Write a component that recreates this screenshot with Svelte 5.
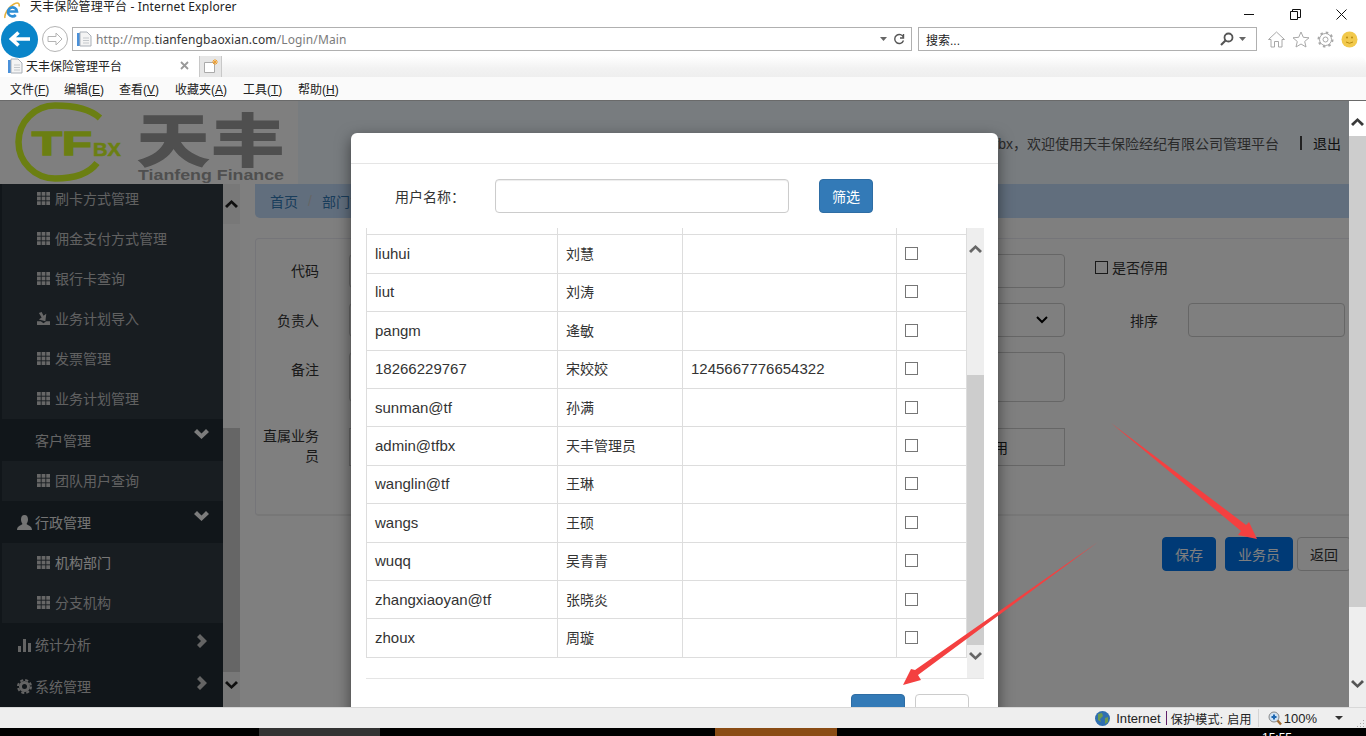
<script>
  const menus = [['文件','F'],['编辑','E'],['查看','V'],['收藏夹','A'],['工具','T'],['帮助','H']];
  const users = [
    ['liuhui','刘慧',''],['liut','刘涛',''],['pangm','逄敏',''],['18266229767','宋姣姣','1245667776654322'],
    ['sunman@tf','孙满',''],['admin@tfbx','天丰管理员',''],['wanglin@tf','王琳',''],['wangs','王硕',''],
    ['wuqq','吴青青',''],['zhangxiaoyan@tf','张晓炎',''],['zhoux','周璇','']
  ];
  const firstSubs = [['刷卡方式管理','th'],['佣金支付方式管理','th'],['银行卡查询','th'],['业务计划导入','imp'],['发票管理','th'],['业务计划管理','th']];
  const squares = [0,5,10].flatMap(y => [0,5,10].map(x => [x,y]));
</script>

{#snippet th()}
  <svg class="ico" width="13" height="13" viewBox="0 0 14 14">
    {#each squares as s}<rect x={s[0]} y={s[1]} width="4" height="4" fill="currentColor"/>{/each}
  </svg>
{/snippet}
{#snippet imp()}
  <svg class="ico" width="13" height="13" viewBox="0 0 14 14">
    <path d="M0 14V10H4L7 12 10 10H14V14ZM2 1L5 0 7 4 10 2 9 10 2 8 5 6Z" fill="currentColor"/>
  </svg>
{/snippet}
{#snippet chevDown(cls)}
  <svg class={cls} width="15" height="10" viewBox="0 0 15 10"><path d="M0 3L3 0 7.500 4.500 12 0 15 3 7.500 10Z" fill="currentColor"/></svg>
{/snippet}
{#snippet chevRight()}
  <svg class="chev right" width="10" height="14" viewBox="0 0 10 14"><path d="M3 0L10 7 3 14 0 11 4 7 0 3Z" fill="currentColor"/></svg>
{/snippet}
{#snippet chevUp(color)}
  <svg width="13" height="8" viewBox="0 0 13 8"><path d="M0 6L6.500 0 13 6 11 8 6.500 3.500 2 8Z" fill={color}/></svg>
{/snippet}
{#snippet chevDn(color)}
  <svg width="13" height="8" viewBox="0 0 13 8"><path d="M0 2L6.500 8 13 2 11 0 6.500 4.500 2 0Z" fill={color}/></svg>
{/snippet}
{#snippet pageIcon()}
  <svg width="16" height="16" viewBox="0 0 16 16">
    <rect x="1" y="2" width="6" height="13" fill="#4a90d9"/>
    <path d="M4 1H11L15 5V15H4Z" fill="#f4f4f4" stroke="#aab0b8"/>
    <path d="M7 7H13M7 9.500H13M7 12H13" stroke="#c4c8cc"/>
  </svg>
{/snippet}

<div class="window">
  <div class="titlebar">
    <svg class="ie" width="16" height="17" viewBox="0 0 16 17">
      <path d="M1 16C0 13 4 5 10 2 13.500 0.300 16 1 15 4.500" fill="none" stroke="#e8b23c" stroke-width="1.500"/>
      <path d="M4.500 9.500H13A4.500 4.500 0 1 0 11.800 13" fill="none" stroke="#2e8ed6" stroke-width="2.600"/>
    </svg>
    <span class="title">天丰保险管理平台 - Internet Explorer</span>
    <div class="winctl">
      <svg width="11" height="11" viewBox="0 0 11 11"><path d="M0 5.500H10" stroke="#111"/></svg>
      <svg width="11" height="11" viewBox="0 0 11 11"><path d="M0.500 2.500H7.500V10.500H0.500ZM2.500 2.500V0.500H10.500V8.500H7.500" fill="none" stroke="#111"/></svg>
      <svg width="11" height="11" viewBox="0 0 11 11"><path d="M0.500 0.500L10.500 10.500M10.500 0.500L0.500 10.500" stroke="#111"/></svg>
    </div>
  </div>

  <div class="navbar">
    <div class="back">
      <svg width="22" height="16" viewBox="0 0 22 16"><path d="M9.500 1.500L2.500 8 9.500 14.500M3.500 8H21" fill="none" stroke="#fff" stroke-width="3.600"/></svg>
    </div>
    <div class="forward">
      <svg width="18" height="14" viewBox="0 0 18 14"><path d="M10 1L16 7 10 13V9.500H2V4.500H10Z" fill="none" stroke="#b4b4b4"/></svg>
    </div>
    <div class="addr">
      {@render pageIcon()}
      <span class="url">http://mp.<b>tianfengbaoxian.com</b>/Login/Main</span>
      <svg class="drop" width="7" height="4" viewBox="0 0 7 4"><path d="M0 0H7L3.500 4Z" fill="#666"/></svg>
      <svg width="12" height="12" viewBox="0 0 12 12"><path d="M10.500 4.500A4.500 4.500 0 1 0 10.500 7.500M10.500 1V5H7" fill="none" stroke="#555" stroke-width="1.400"/></svg>
    </div>
    <div class="search">
      <span class="stext">搜索...</span>
      <svg width="14" height="14" viewBox="0 0 14 14"><circle cx="8.500" cy="5.500" r="4" fill="none" stroke="#555" stroke-width="1.800"/><path d="M5.500 8.500L1 13" stroke="#555" stroke-width="2.200"/></svg>
      <svg class="drop2" width="7" height="4" viewBox="0 0 7 4"><path d="M0 0H7L3.500 4Z" fill="#666"/></svg>
    </div>
    <div class="tools">
      <svg width="17" height="17" viewBox="0 0 17 17"><path d="M0.500 8.500L8.500 1 16.500 8.500H14V16H10.500V10.500H6.500V16H3V8.500Z" fill="none" stroke="#a8a8a8"/></svg>
      <svg width="18" height="17" viewBox="0 0 18 17"><path d="M9 1L11.300 6.300 17 6.800 12.700 10.500 14 16 9 13 4 16 5.300 10.500 1 6.800 6.700 6.300Z" fill="none" stroke="#a8a8a8"/></svg>
      <svg width="17" height="17" viewBox="0 0 17 17"><circle cx="8.500" cy="8.500" r="2.500" fill="none" stroke="#a8a8a8"/><circle cx="8.500" cy="8.500" r="6" fill="none" stroke="#a8a8a8" stroke-width="1"/><circle cx="8.500" cy="8.500" r="7" fill="none" stroke="#a8a8a8" stroke-width="2" stroke-dasharray="2.500 3"/></svg>
      <svg width="17" height="17" viewBox="0 0 17 17"><circle cx="8.500" cy="8.500" r="8" fill="#f2c94c"/><circle cx="6" cy="6.500" r="1" fill="#b88a10"/><circle cx="11" cy="6.500" r="1" fill="#b88a10"/><path d="M5 11Q8.500 13.500 12 11" fill="none" stroke="#b88a10"/></svg>
    </div>
  </div>

  <div class="tabbar">
    <div class="tab">
      {@render pageIcon()}
      <span class="tabtitle">天丰保险管理平台</span>
      <svg width="9" height="9" viewBox="0 0 9 9"><path d="M1 1L8 8M8 1L1 8" stroke="#999" stroke-width="1.800"/></svg>
    </div>
    <div class="newtab">
      <svg width="16" height="16" viewBox="0 0 16 16"><path d="M1.500 4.500H11.500V14.500H1.500Z" fill="#fff" stroke="#aaa"/><path d="M12 1V7M9 4H15M10 2L14 6M14 2L10 6" stroke="#f0a030"/></svg>
    </div>
    <div class="tabfade"></div>
  </div>

  <div class="menubar">
    {#each menus as m}
      <span class="menu">{m[0]}(<u>{m[1]}</u>)</span>
    {/each}
  </div>

  <div class="page">
    <div class="main">
      <header class="head">
        <svg class="logo" width="298" height="83" viewBox="0 0 298 83">
          <rect width="298" height="83" fill="#fff"/>
          <path d="M100 17C90 8 72 4.500 55 4.500A36.500 36.500 0 0 0 55 77.500C72 77.500 88 74 97 62" fill="none" stroke="#d6ff24" stroke-width="6.500"/>
          <text x="32" y="54" class="lg-tf" textLength="60" lengthAdjust="spacingAndGlyphs">TF</text>
          <text x="93" y="55" class="lg-bx" textLength="28" lengthAdjust="spacingAndGlyphs">BX</text>
          <text x="136" y="61" class="lg-cn" textLength="149" lengthAdjust="spacingAndGlyphs">天丰</text>
          <text x="138" y="79" class="lg-en" textLength="146" lengthAdjust="spacingAndGlyphs">Tianfeng Finance</text>
        </svg>
        <div class="welcome">
          <span class="wtext">admin@tfbx，欢迎使用天丰保险经纪有限公司管理平台</span>
          <span class="bar"></span>
          <span class="logout">退出</span>
        </div>
      </header>

      <div class="body">
        <aside class="side">
          <div class="sidelist">
            <div class="subs">
              {#each firstSubs as s}
                <div class="sub">{#if s[1]==='th'}{@render th()}{:else}{@render imp()}{/if}<span>{s[0]}</span></div>
              {/each}
            </div>
            <div class="parent plain"><span>客户管理</span>{@render chevDown('chev')}</div>
            <div class="subs">
              <div class="sub">{@render th()}<span>团队用户查询</span></div>
            </div>
            <div class="parent active">
              <svg class="pico" width="15" height="15" viewBox="0 0 15 15"><path d="M7.500 0C10 0 11 2 11 4.500 11 6.500 10 8 9.500 9 11 10.500 15 11 15 15H0C0 11 4 10.500 5.500 9 5 8 4 6.500 4 4.500 4 2 5 0 7.500 0Z" fill="currentColor"/></svg>
              <span>行政管理</span>{@render chevDown('chev')}
            </div>
            <div class="subs">
              <div class="sub current">{@render th()}<span>机构部门</span></div>
              <div class="sub">{@render th()}<span>分支机构</span></div>
            </div>
            <div class="parent">
              <svg class="pico" width="15" height="15" viewBox="0 0 15 15"><path d="M1 9H4V15H1ZM6 2H9V15H6ZM11 6H14V15H11Z" fill="currentColor"/></svg>
              <span>统计分析</span>{@render chevRight()}
            </div>
            <div class="parent">
              <svg class="pico" width="15" height="15" viewBox="0 0 15 15"><circle cx="7.500" cy="7.500" r="4" fill="none" stroke="currentColor" stroke-width="3"/><circle cx="7.500" cy="7.500" r="6.500" fill="none" stroke="currentColor" stroke-width="2" stroke-dasharray="3 2.100"/></svg>
              <span>系统管理</span>{@render chevRight()}
            </div>
          </div>
        </aside>
        <div class="sidescroll">
          <div class="sarrow">{@render chevUp('#1c1c1c')}</div>
          <div class="sgap"></div>
          <div class="sthumb"></div>
          <div class="sarrow low">{@render chevDn('#1c1c1c')}</div>
        </div>

        <section class="content">
          <nav class="crumb"><a href="#a">首页</a><i>/</i><a href="#b">部门管理</a></nav>
          <div class="panel">
            <div class="form">
              <label class="lab first" for="a1">代码</label>
              <input id="a1" class="inp" />
              <div class="stop"><input type="checkbox" class="check big" /><span>是否停用</span></div>

              <label class="lab" for="a2">负责人</label>
              <div class="inp sel" id="a2">
                <svg width="12" height="8" viewBox="0 0 12 8"><path d="M1 1L6 6 11 1" fill="none" stroke="#000" stroke-width="2"/></svg>
              </div>
              <label class="lab" for="a3">排序</label>
              <input id="a3" class="inp" />

              <label class="lab" for="a4">备注</label>
              <textarea id="a4" class="inp area"></textarea>
              <div class="empty"></div>

              <label class="lab lab4" for="a5">直属业务员</label>
              <div class="inp btnish" id="a5">启用</div>
              <div class="empty"></div>
            </div>
          </div>
          <div class="actions">
            <button class="pb">保存</button>
            <button class="pb">业务员</button>
            <button class="pd">返回</button>
          </div>
        </section>
      </div>
    </div>

    <div class="pagescroll">
      <div class="parrow">{@render chevUp('#3a3a3a')}</div>
      <div class="pthumb"></div>
      <div class="parrow2">{@render chevDn('#555')}</div>
    </div>

    <div class="overlay"></div>

    <div class="modal">
      <div class="mhead"></div>
      <div class="filter">
        <span class="flabel">用户名称：</span>
        <input class="finput" />
        <button class="fbtn">筛选</button>
      </div>
      <div class="tablewrap">
        <div class="table">
          <div class="row partial"><div></div><div></div><div></div><div></div></div>
          {#each users as u}
            <div class="row">
              <div class="lat">{u[0]}</div>
              <div class="cjk">{u[1]}</div>
              <div class="lat">{u[2]}</div>
              <div class="chk"><input type="checkbox" class="check" /></div>
            </div>
          {/each}
        </div>
        <div class="mscroll">
          <div class="marrow">{@render chevUp('#666')}</div>
          <div class="mthumb"></div>
          <div class="marrow">{@render chevDn('#666')}</div>
        </div>
      </div>
      <div class="mfoot">
        <button class="okb"></button>
        <button class="cab"></button>
      </div>
    </div>

    <svg class="arrows" width="1366" height="606" viewBox="0 101 1366 606">
      <polygon points="1111,423 1246,525 1249,522 1257,539 1238,535 1241,531" fill="#f44040"/>
      <polygon points="1098,542 918,675 921,680 903,685 911,669 915,670" fill="#f44040"/>
    </svg>
  </div>

  <footer class="status">
    <svg width="15" height="15" viewBox="0 0 15 15"><circle cx="7.500" cy="7.500" r="7.500" fill="#2f6fb0"/><path d="M3 3L7 2 8 5 5 8 6 11 3 9ZM10 7L13 6 13 11 10 13Z" fill="#6b9a50"/></svg>
    <span class="st1">Internet</span><span class="pipe"></span><span class="st2">保护模式: 启用</span>
    <span class="sep"></span>
    <svg width="14" height="15" viewBox="0 0 14 15"><circle cx="6" cy="6" r="5" fill="#cfe2f4" stroke="#888"/><path d="M3.500 6H8.500M6 3.500V8.500" stroke="#1d66b0" stroke-width="2"/><path d="M9.500 9.500L13 13.500" stroke="#a06a30" stroke-width="2.400"/></svg>
    <span class="st3">100%</span>
    <svg class="st4" width="8" height="4" viewBox="0 0 8 4"><path d="M0 0H8L4 4Z" fill="#333"/></svg>
    <svg class="grip" width="9" height="9" viewBox="0 0 9 9"><path d="M7 1H8V2H7ZM4 4H5V5H4ZM7 4H8V5H7ZM1 7H2V8H1ZM4 7H5V8H4ZM7 7H8V8H7Z" fill="#aaa"/></svg>
  </footer>

  <div class="taskbar">
    <span class="t1"></span><span class="t2"></span><span class="clock">15:55</span>
  </div>
</div>

<style>
  :global(body) { margin: 0; background: #fff; }
  .window {
    width: 1366px; height: 736px; overflow: hidden; display: flex; flex-direction: column;
    font-family: "Liberation Sans", "Noto Sans CJK SC", sans-serif; font-size: 14px; color: #333;
  }
  button, input, textarea { font-family: inherit; margin: 0; box-sizing: border-box; }

  .titlebar { height: 22px; display: flex; align-items: center; background: #fff; flex: none; }
  .ie { margin: -2px 0 0 4px; }
  .title { margin-left: 10px; font-size: 12px; line-height: 12px; color: #222; letter-spacing: .15px; margin-top: -8px; font-family: "Noto Sans", "Noto Sans CJK SC", sans-serif; }
  .winctl { margin-left: auto; margin-right: 19px; display: flex; gap: 35px; margin-top: 6px; }

  .navbar { height: 34px; display: flex; align-items: center; flex: none; background: #fff; position: relative; }
  .back { width: 37px; height: 37px; border-radius: 50%; background: #0a85c9; margin-left: 1px; display: flex; align-items: center; justify-content: center; flex: none; z-index: 1; }
  .forward { width: 26px; height: 26px; border-radius: 50%; border: 1px solid #b4b4b4; box-sizing: border-box; margin-left: 4px; display: flex; align-items: center; justify-content: center; flex: none; }
  .addr, .search { height: 24px; border: 1px solid #b0b0b0; box-sizing: border-box; display: flex; align-items: center; background: #fff; }
  .addr { width: 840px; margin-left: 4px; padding: 0 6px 0 3px; }
  .url { margin-left: 4px; font-size: 12px; color: #7b7b7b; letter-spacing: .13px; flex: 1; font-family: "Noto Sans", sans-serif; }
  .url b { color: #333; font-weight: 400; }
  .drop { margin-right: 6px; }
  .search { width: 339px; margin-left: 6px; padding: 0 10px 0 7px; }
  .stext { flex: 1; font-size: 12px; color: #222; }
  .drop2 { margin-left: 5px; }
  .tools { margin-left: 11px; display: flex; gap: 7px; align-items: center; }

  .tabbar { height: 21px; display: flex; flex: none; background: #fff; }
  .tab { width: 197px; height: 21px; box-sizing: border-box; display: flex; align-items: center; padding: 0 8px 2px 7px; background: #fff; }
  .tabtitle { font-size: 12px; margin-left: 3px; flex: 1; color: #222; }
  .newtab { width: 23px; height: 23px; margin: -2px 0 0 2px; background: #e6e6e6; border: 1px solid #c8c8c8; border-bottom: 0; box-sizing: border-box; display: flex; align-items: center; justify-content: center; }
  .tabfade { flex: 1; background: linear-gradient(#fff, #f2f2f2 60%, #eee); border-radius: 0 8px 0 0; }

  .menubar { height: 24px; flex: none; display: flex; align-items: center; background: #fafafa; border-bottom: 1px solid #6a6a6a; box-sizing: border-box; padding-left: 10px; font-size: 12px; color: #222; }
  .menu { width: 55px; white-space: nowrap; }
  .menu:nth-child(1) { width: 54px; }
  .menu:nth-child(3) { width: 56px; }
  .menu:nth-child(4) { width: 68px; }

  .page { height: 606px; flex: none; display: flex; position: relative; overflow: hidden; background: #fff; }
  .main { width: 1349px; flex: none; display: flex; flex-direction: column; overflow: hidden; }

  .head { height: 83px; flex: none; background: #f0f8ff; display: flex; }
  .logo { flex: none; }
  .lg-tf { font: 700 33px "Liberation Sans", sans-serif; fill: #d6ff24; stroke: #d6ff24; stroke-width: 1.4px; }
  .lg-bx { font: 700 18px "Liberation Sans", sans-serif; fill: #d6ff24; stroke: #d6ff24; stroke-width: .5px; }
  .lg-cn { font: 900 58px "Noto Sans CJK SC", sans-serif; fill: #9e9e9e; }
  .lg-en { font: 700 15px "Liberation Sans", sans-serif; fill: #9e9e9e; }
  .welcome { margin-left: auto; display: flex; align-items: center; height: 20px; margin-top: 32px; padding-right: 8px; white-space: nowrap; }
  .wtext { color: #555; }
  .bar { width: 2px; height: 14px; background: #444; margin: 0 11px 0 21px; }
  .logout { color: #222; }

  .body { flex: 1; display: flex; min-height: 0; }
  .side { width: 223px; flex: none; background: #222c34; overflow: hidden; }
  .sidelist { margin-top: -5px; }
  .subs { margin-left: 2px; background: #303a42; }
  .sub { height: 40px; display: flex; align-items: center; padding: 0 0 2px 35px; color: #c2c2c2; font-size: 14px; gap: 5px; box-sizing: border-box; }
  .sub.current { color: #f0f0f0; }
  .ico { flex: none; }
  .sub .ico { color: #cfcfcf; }
  .parent { height: 42px; display: flex; align-items: center; padding-left: 17px; color: #c8c8c8; position: relative; gap: 3px; box-sizing: border-box; }
  .parent.plain { padding-left: 35px; }
  .parent.active { color: #e8e8e8; }
  .pico { flex: none; }
  .parent :global(.chev) { position: absolute; left: 194px; top: 10px; color: #f8f8f8; }
  .parent :global(.chev.right) { left: 197px; top: 11px; color: #c8c8c8; }

  .sidescroll { width: 17px; flex: none; display: flex; flex-direction: column; background: #f0f0f0; }
  .sarrow { height: 40px; display: flex; align-items: center; justify-content: center; flex: none; }
  .sgap { height: 204px; flex: none; background: #fafafa; }
  .sthumb { flex: 1; background: #cdcdcd; }
  .sarrow.low { height: 35px; padding-bottom: 9px; box-sizing: border-box; background: #f0f0f0; }

  .content { flex: 1; min-width: 0; padding-left: 15px; background: #fff; overflow: hidden; }
  .crumb { height: 34px; background: #c2dcfb; border-bottom-left-radius: 5px; display: flex; align-items: center; padding-left: 15px; }
  .crumb a { color: #337ab7; text-decoration: none; }
  .crumb i { color: #ccc; font-style: normal; margin: 0 10px; }
  .panel { margin-top: 20px; height: 278px; width: 1120px; box-sizing: border-box; background: #fff; border: 1px solid #eaeaf2; border-bottom: 2px solid #eee; border-radius: 4px; padding-top: 15px; }
  .form { display: grid; grid-template-columns: 63px 716px 63px 157px; column-gap: 30px; row-gap: 15px; grid-template-rows: 34px 34px 50px 38px; }
  .lab { text-align: right; padding-top: 8px; color: #333; font-weight: 400; line-height: 20px; }
  .lab.first { padding-top: 7px; }
  .form > .lab4 { padding-top: 0; margin-top: 9px; }
  .btnish { margin-top: 11px; }
  .empty { grid-column: 3 / 5; }
  .inp { border: 1px solid #ccc; border-radius: 4px; background: #fff; box-sizing: border-box; width: 100%; height: 100%; display: block; }
  .area { resize: none; }
  .sel { display: flex; align-items: center; justify-content: flex-end; padding-right: 16px; }
  .btnish { border-radius: 0; display: flex; align-items: center; justify-content: flex-end; padding-right: 56px; color: #222; height: 38px; }
  .stop { grid-column: 3 / 5; display: flex; align-items: flex-start; gap: 4px; padding-top: 3px; }
  .stop .check { margin-top: 4px; }
  .check { appearance: none; -webkit-appearance: none; width: 13px; height: 13px; border: 1px solid #767676; background: #fff; margin: 0; display: block; }
  .check.big { border-color: #333; border-radius: 0; }
  .actions { display: flex; justify-content: flex-end; gap: 9px; margin-top: 21px; margin-right: -2px; }
  .actions button { height: 34px; border-radius: 4px; font-size: 14px; }
  .pb { background: #0074ec; color: #fff; border: 1px solid #0074ec; width: 54px; }
  .pb:nth-child(2) { width: 68px; }
  .pd { background: #fff; color: #333; border: 1px solid #ccc; width: 54px; margin-left: -5px; }

  .pagescroll { width: 17px; flex: none; display: flex; flex-direction: column; background: #eee; position: relative; z-index: 3; }
  .parrow { height: 35px; display: flex; align-items: center; justify-content: center; background: #fff; flex: none; padding-top: 6px; box-sizing: border-box; }
  .pthumb { height: 471px; background: #cdcdcd; flex: none; }
  .parrow2 { flex: 1; display: flex; align-items: flex-end; justify-content: center; padding-bottom: 19px; }

  .overlay { position: absolute; left: 0; top: 0; width: 1349px; height: 100%; background: rgba(0,0,0,.5); z-index: 1; }

  .modal { position: absolute; left: 351px; top: 32px; width: 647px; height: 640px; background: #fff; border-radius: 6px; box-shadow: 0 5px 15px rgba(0,0,0,.5); z-index: 2; }
  .mhead { height: 30px; border-bottom: 1px solid #e5e5e5; }
  .filter { display: flex; align-items: center; height: 34px; margin-top: 15px; padding-left: 44px; }
  .flabel { width: 100px; flex: none; color: #333; }
  .finput { width: 294px; height: 34px; border: 1px solid #ccc; border-radius: 4px; box-shadow: inset 0 1px 1px rgba(0,0,0,.075); }
  .fbtn { width: 54px; height: 34px; margin-left: 30px; background: #337ab7; border: 1px solid #2e6da4; border-radius: 4px; color: #fff; font-size: 14px; }
  .tablewrap { display: flex; margin: 15px 14px 0 15px; height: 450px; border-bottom: 1px solid #e5e5e5; box-sizing: content-box; }
  .table { width: 601px; flex: none; }
  .row { display: grid; grid-template-columns: 191px 125px 214px 71px; height: 38.4px; box-sizing: border-box; }
  .row > div { border-left: 1px solid #ddd; border-bottom: 1px solid #ddd; padding: 0 8px; display: flex; align-items: center; color: #333; font-size: 14px; box-sizing: border-box; min-width: 0; }
  .row > div:last-child { border-right: 1px solid #ddd; }
  .row > .lat { font-size: 15px; padding-bottom: 1px; }
  .row > .cjk { padding-bottom: 2px; }
  .row > .chk { padding-bottom: 1px; }
  .row.partial { height: 7.4px; }
  .mscroll { width: 17px; flex: none; background: #eee; display: flex; flex-direction: column; }
  .marrow { height: 21px; display: flex; align-items: center; justify-content: center; flex: none; }
  .marrow:first-child { height: 147px; align-items: flex-start; padding-top: 17px; box-sizing: border-box; }
  .mthumb { height: 270px; flex: none; background: #cdcdcd; }
  .mfoot { display: flex; justify-content: flex-end; gap: 10px; padding: 15px 29px 0 0; }
  .mfoot button { width: 54px; height: 34px; border-radius: 4px; }
  .okb { background: #337ab7; border: 1px solid #2e6da4; }
  .cab { background: #fff; border: 1px solid #ccc; }

  .arrows { position: absolute; left: 0; top: 0; z-index: 4; pointer-events: none; }

  .status { height: 21px; flex: none; background: #eee; border-top: 1px solid #d8d8d8; box-sizing: border-box; display: flex; align-items: center; justify-content: flex-end; font-size: 12px; color: #222; padding-right: 1px; }
  .st1 { margin-left: 6px; font-size: 13px; letter-spacing: .05px; }
  .pipe { width: 1px; height: 14px; background: #60206a; margin: 0 4px 0 5px; }
  .st2 { letter-spacing: .3px; }
  .sep { width: 1px; height: 18px; background: #d4d4d4; margin: 0 9px 0 6px; }
  .st3 { margin-left: 2px; font-size: 13px; }
  .st4 { margin-left: 18px; }
  .grip { margin-left: 13px; align-self: flex-end; }

  .taskbar { height: 8px; flex: none; background: #000; position: relative; overflow: hidden; display: flex; }
  .t1 { width: 121px; margin-left: 259px; background: #333; }
  .t2 { width: 122px; margin-left: 335px; background: #8a4c14; }
  .clock { margin-left: 425px; color: #fff; font-size: 12px; line-height: 12px; margin-top: 4px; }
</style>
